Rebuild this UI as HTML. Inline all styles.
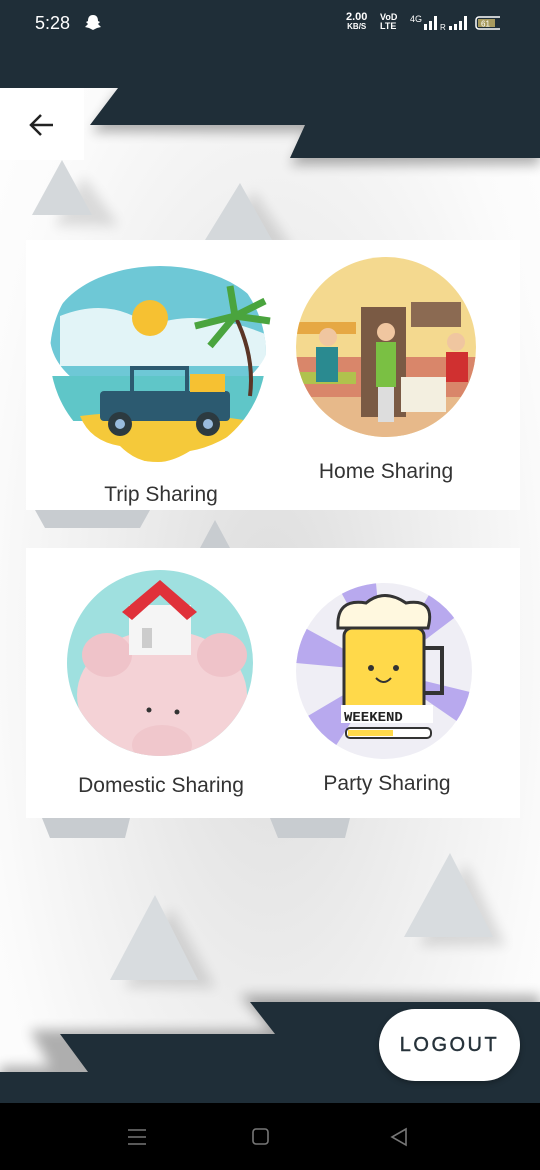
<!DOCTYPE html>
<html><head><meta charset="utf-8"><style>
*{margin:0;padding:0;box-sizing:border-box}
body{width:540px;height:1170px;overflow:hidden;position:relative;font-family:"Liberation Sans",sans-serif;background:radial-gradient(ellipse at 50% 55%,#dcdcdc 0%,#efefef 45%,#fbfbfb 75%,#fff 100%)}
.abs{position:absolute}
.card{position:absolute;left:26px;width:494px;height:270px;background:#fff}
.lbl{position:absolute;font-size:21px;color:#333;white-space:nowrap;transform:translateX(-50%)}
</style></head><body>
<svg class="abs" style="left:0;top:0" width="540" height="1170">
<defs><filter id="sh" x="-20%" y="-20%" width="150%" height="150%"><feGaussianBlur stdDeviation="6"/></filter></defs>
<g fill="#000" opacity=".12" filter="url(#sh)">
<polygon points="70,170 105,220 40,220" transform="translate(14,6)"/>
<polygon points="240,185 280,245 200,245" transform="translate(14,6)"/>
<polygon points="155,900 200,980 108,980" transform="translate(16,8)"/>
<polygon points="450,855 490,938 403,938" transform="translate(16,8)"/>
</g>
<polygon points="62,160 92,215 32,215" fill="#d4d8db"/>
<polygon points="240,183 272,240 205,240" fill="#d4d8db"/>
<polygon points="155,895 198,980 110,980" fill="#d8dcdf"/>
<polygon points="450,853 493,937 404,937" fill="#d8dcdf"/>
<polygon points="35,510 150,510 140,528 45,528" fill="#c8ccd0"/>
<polygon points="200,548 230,548 215,520" fill="#c8ccd0"/>
<polygon points="42,818 130,818 125,838 50,838" fill="#c8ccd0"/>
<polygon points="270,818 350,818 345,838 278,838" fill="#c8ccd0"/>
<g opacity=".3" filter="url(#sh)"><polygon points="118,92 540,92 540,132 92,132" fill="#000"/><polygon points="310,130 540,130 540,165 290,165" fill="#000"/></g>
<polygon points="0,0 540,0 540,158 290,158 305,125 90,125 118,88 0,88" fill="#1f2e38"/>
<g opacity=".3" filter="url(#sh)"><polygon points="240,995 540,995 540,1103 0,1103 0,1066 50,1066 30,1030 270,1030" fill="#000"/></g>
<polygon points="250,1002 540,1002 540,1103 0,1103 0,1072 88,1072 60,1034 275,1034" fill="#1f2e38"/>
<rect x="0" y="1103" width="540" height="67" fill="#000"/>
<g stroke="#777" stroke-width="1.6" fill="none">
<path d="M128 1130h18M128 1137h18M128 1144h18"/>
<rect x="253" y="1129" width="15" height="15" rx="3"/>
<path d="M406 1129l-14 8 14 8z"/>
</g>
</svg>
<div class="abs" style="left:35px;top:13px;color:#fff;font-size:18px">5:28</div>
<svg class="abs" style="left:84px;top:14px" width="18" height="18"><path d="M9 1c4 0 5 3 5 6l2 1-2 2 3 3-4 1-4 2-4-2-4-1 3-3-2-2 2-1c0-3 1-6 5-6z" fill="#fff"/></svg>
<div class="abs" style="left:346px;top:13px;color:#fff;font-size:11px;line-height:9px;font-weight:bold;text-align:center">2.00<br><span style="font-size:8px">KB/S</span></div>
<div class="abs" style="left:380px;top:13px;color:#fff;font-size:9px;line-height:9px;font-weight:bold">VoD<br>LTE</div>
<div class="abs" style="left:410px;top:14px;color:#fff;font-size:9px">4G</div>
<svg class="abs" style="left:420px;top:14px" width="80" height="20"><g fill="#fff"><rect x="4" y="10" width="3" height="6"/><rect x="9" y="7" width="3" height="9"/><rect x="14" y="2" width="3" height="14"/><text x="20" y="16" font-size="8" fill="#fff">R</text><rect x="29" y="12" width="3" height="4"/><rect x="34" y="10" width="3" height="6"/><rect x="39" y="7" width="3" height="9"/><rect x="44" y="2" width="3" height="14"/></g><rect x="56" y="3" width="27" height="12" rx="3" fill="none" stroke="#fff" stroke-width="1.5"/><rect x="58" y="5" width="17" height="8" fill="#a79a5e"/><text x="61" y="12.5" font-size="8" fill="#fff">61</text></svg>
<div class="abs" style="left:0;top:88px;width:84px;height:72px;background:#fff"></div>
<svg class="abs" style="left:28px;top:112px" width="28" height="26"><path d="M25 13H4M13 3L3 13l10 10" stroke="#222" stroke-width="2.5" fill="none"/></svg>
<div class="card" style="top:240px">
<svg class="abs" style="left:24px;top:6px" width="230" height="230">
<defs><clipPath id="c1"><circle cx="108" cy="108" r="108"/></clipPath></defs>
<g clip-path="url(#c1)"><rect width="230" height="230" fill="#fff"/>
<ellipse cx="110" cy="90" rx="110" ry="70" fill="#6ec8d6"/>
<path d="M10 70 Q60 50 100 80 Q150 60 220 90 L220 120 L10 120z" fill="#fff" opacity=".8"/>
<circle cx="100" cy="72" r="18" fill="#f6c132"/>
<rect x="0" y="130" width="230" height="45" fill="#5fc6c8"/>
<path d="M30 170 Q110 160 200 175 Q170 200 140 205 Q100 230 70 200 Q40 195 30 170z" fill="#f5c93a"/>
</g>
<path d="M185 70 Q205 110 200 150" stroke="#5a3526" stroke-width="4" fill="none"/>
<path d="M185 70 l-40 10 M185 70 l30 -15 M185 70 l-25 30 M185 70 l35 5 M185 70 l-5 -30" stroke="#4aa43e" stroke-width="7" fill="none"/>
<rect x="50" y="145" width="130" height="30" rx="4" fill="#2c5a70"/>
<rect x="82" y="122" width="55" height="25" fill="none" stroke="#2c5a70" stroke-width="4"/>
<rect x="140" y="128" width="35" height="18" fill="#f6c132"/>
<circle cx="70" cy="178" r="12" fill="#2c3a40"/><circle cx="158" cy="178" r="12" fill="#2c3a40"/>
<circle cx="70" cy="178" r="5" fill="#9bd"/><circle cx="158" cy="178" r="5" fill="#9bd"/>
</svg>
<div class="lbl" style="left:135px;top:243px">Trip Sharing</div>
<svg class="abs" style="left:270px;top:17px" width="182" height="182">
<defs><clipPath id="c2"><circle cx="90" cy="90" r="90"/></clipPath></defs>
<g clip-path="url(#c2)"><rect width="182" height="182" fill="#f4d98f"/>
<rect y="100" width="182" height="40" fill="#d9866a"/>
<rect y="140" width="182" height="42" fill="#e7b98a"/>
<rect x="65" y="50" width="45" height="110" fill="#7a5a44"/>
<rect x="0" y="65" width="60" height="12" fill="#e6a843"/>
<rect x="0" y="115" width="60" height="12" fill="#b0c24d"/>
<rect x="115" y="45" width="50" height="25" fill="#8b6a52"/>
<rect x="20" y="90" width="22" height="35" fill="#2a8a90"/><circle cx="32" cy="80" r="9" fill="#f0c6a0"/>
<rect x="80" y="85" width="20" height="45" fill="#7ac043"/><circle cx="90" cy="75" r="9" fill="#f0c6a0"/><rect x="82" y="130" width="16" height="35" fill="#ddd"/>
<rect x="150" y="95" width="22" height="30" fill="#d03030"/><circle cx="160" cy="85" r="9" fill="#f0c6a0"/>
<rect x="105" y="120" width="45" height="35" fill="#f3efe0"/>
</g></svg>
<div class="lbl" style="left:360px;top:220px">Home Sharing</div>
</div>
<div class="card" style="top:548px">
<svg class="abs" style="left:41px;top:22px" width="188" height="188">
<defs><clipPath id="c3"><circle cx="93" cy="93" r="93"/></clipPath></defs>
<g clip-path="url(#c3)"><rect width="188" height="188" fill="#9fe0df"/>
<ellipse cx="95" cy="125" rx="85" ry="65" fill="#f4d2d6"/>
<ellipse cx="40" cy="85" rx="25" ry="22" fill="#efc3c9"/><ellipse cx="155" cy="85" rx="25" ry="22" fill="#efc3c9"/>
<ellipse cx="95" cy="175" rx="30" ry="20" fill="#f0c7cc"/>
<circle cx="82" cy="140" r="2.5" fill="#333"/><circle cx="110" cy="142" r="2.5" fill="#333"/>
<rect x="62" y="35" width="62" height="50" fill="#f5f5f5"/>
<polygon points="55,42 93,10 130,42 120,50 93,25 65,50" fill="#e0313a"/>
<rect x="75" y="58" width="10" height="20" fill="#ccc"/>
</g></svg>
<div class="lbl" style="left:135px;top:226px">Domestic Sharing</div>
<svg class="abs" style="left:270px;top:35px" width="178" height="178">
<defs><clipPath id="c4"><circle cx="88" cy="88" r="88"/></clipPath></defs>
<g clip-path="url(#c4)"><rect width="178" height="178" fill="#efeef5"/>
<path d="M88 88 L0 40 L0 80z M88 88 L40 0 L80 0z M88 88 L140 0 L178 20z M88 88 L178 110 L178 150z M88 88 L0 140 L0 178 L30 178z" fill="#b8a9ee"/>
<rect x="48" y="45" width="80" height="85" rx="8" fill="#ffd94a" stroke="#333" stroke-width="3"/>
<path d="M128 65 h18 v45 h-18" fill="none" stroke="#333" stroke-width="4"/>
<path d="M42 45 Q40 15 70 20 Q88 5 110 20 Q140 15 132 45z" fill="#fff8df" stroke="#333" stroke-width="3"/>
<circle cx="75" cy="85" r="3" fill="#333"/><circle cx="100" cy="85" r="3" fill="#333"/>
<path d="M80 95 q8 8 15 0" stroke="#333" stroke-width="2" fill="none"/>
<rect x="45" y="122" width="92" height="18" fill="#fff"/>
<text x="48" y="138" font-size="14" font-weight="bold" fill="#222" font-family="Liberation Mono">WEEKEND</text>
<rect x="50" y="145" width="85" height="10" rx="4" fill="#fff" stroke="#333" stroke-width="2"/><rect x="52" y="147" width="45" height="6" fill="#ffd94a"/>
</g></svg>
<div class="lbl" style="left:361px;top:224px">Party Sharing</div>
</div>
<div class="abs" style="left:379px;top:1009px;width:141px;height:72px;border-radius:36px;background:#fff;box-shadow:0 2px 6px rgba(0,0,0,.3);color:#26323a;font-size:20px;letter-spacing:2.5px;text-align:center;line-height:72px;-webkit-text-stroke:.4px #26323a">LOGOUT</div>
</body></html>
